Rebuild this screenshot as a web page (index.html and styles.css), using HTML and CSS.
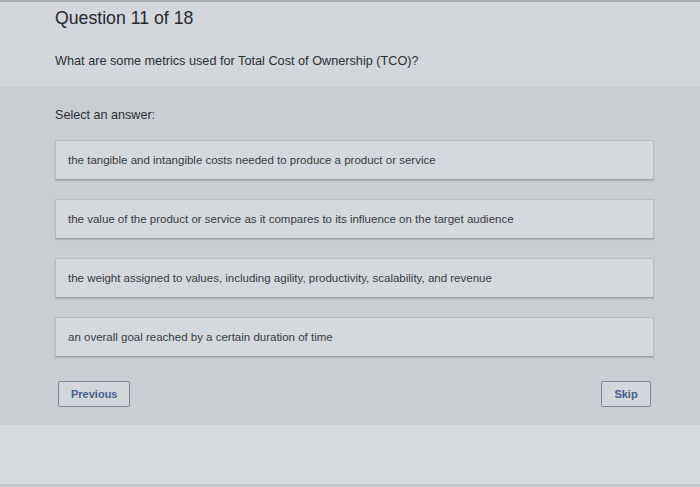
FILE: index.html
```html
<!DOCTYPE html>
<html lang="en">
  <head>
    <meta charset="UTF-8" />
    <meta name="viewport" content="width=device-width, initial-scale=1.0" />
    <title>Question 11 of 18</title>
    <link rel="stylesheet" href="styles.css">
  </head>
  <body>
    <div class="question-header">
      <h1>Question 11 of 18</h1>
      <p class="question-text">What are some metrics used for Total Cost of Ownership (TCO)?</p>
    </div>

    <div class="answer-area">
      <p class="answer-label">Select an answer:</p>
      <div class="answer-list">
        <div class="answer-option">the tangible and intangible costs needed to produce a product or service</div>
        <div class="answer-option">the value of the product or service as it compares to its influence on the target audience</div>
        <div class="answer-option">the weight assigned to values, including agility, productivity, scalability, and revenue</div>
        <div class="answer-option">an overall goal reached by a certain duration of time</div>
      </div>
      <div class="nav-buttons">
        <button class="nav-btn prev-btn">Previous</button>
        <button class="nav-btn skip-btn">Skip</button>
      </div>
    </div>

    <div class="page-footer"></div>
  </body>
</html>
```

FILE: styles.css
```css
body {
  margin: 0;
  font-family: "Liberation Sans", sans-serif;
  color: #2f3236;
  background-color: #d5d9dc;
  width: 700px;
  height: 487px;
  overflow: hidden;
}
.question-header {
  background-color: #d3d6db;
  border-top: 2px solid #a9adb3;
  padding: 4px 0 0 55px;
  height: 81px;
}
.question-header h1 {
  margin: 0;
  font-weight: normal;
  font-size: 17.7px;
  line-height: 24px;
  color: #26292d;
}
.question-text {
  margin: 24px 0 0;
  font-size: 12.7px;
  color: #2c2f33;
}
.answer-area {
  background-color: #cacdd2;
  height: 338px;
  padding: 0 46px 0 55px;
  box-sizing: border-box;
}
.answer-label {
  margin: 0;
  padding-top: 20px;
  font-size: 12.6px;
  line-height: 16px;
  color: #2c2f33;
}
.answer-list {
  display: flex;
  flex-direction: column;
  gap: 19px;
  margin-top: 17px;
}
.answer-option {
  height: 38px;
  display: flex;
  align-items: center;
  padding-left: 12px;
  font-size: 11.5px;
  color: #383b40;
  background-color: #d5d8dc;
  border: 1px solid #b9bcc1;
  border-bottom-color: #9fa3a9;
  box-shadow: 0 1px 1px rgba(0, 0, 0, 0.12);
}
.nav-buttons {
  display: flex;
  justify-content: space-between;
  margin-top: 24px;
  padding: 0 3px;
}
.nav-btn {
  font-family: "Liberation Sans", sans-serif;
  font-size: 11px;
  font-weight: bold;
  color: #44618a;
  background-color: #d3d6db;
  border: 1px solid #7f828c;
  border-radius: 2px;
  height: 26px;
  padding: 0 12px;
}
.prev-btn {
  width: 72px;
}
.skip-btn {
  width: 50px;
  padding: 0;
}
.page-footer {
  height: 59px;
  background-color: #d6dadd;
  border-bottom: 3px solid #c3c7cb;
}
```
